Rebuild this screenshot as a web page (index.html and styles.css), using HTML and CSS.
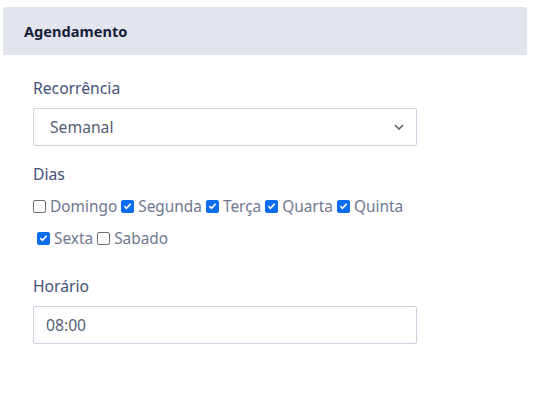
FILE: index.html
```html
<!DOCTYPE html>
<html lang="pt">
<head>
<meta charset="utf-8">
<link rel="stylesheet" href="styles.css">
</head>
<body>
<div class="card">
  <div class="card-header">Agendamento</div>
  <div class="card-body">
    <div class="field">
      <label class="label">Recorrência</label>
      <div class="select">
        <span>Semanal</span>
        <svg class="chev" width="10" height="6" viewBox="0 0 10 6"><path d="M1 1l4 4 4-4" fill="none" stroke="#555d6e" stroke-width="1.6"/></svg>
      </div>
    </div>
    <div class="field">
      <label class="label">Dias</label>
      <div class="days">
        <span class="day"><span class="cb"></span>Domingo</span>
        <span class="day"><span class="cb on"><svg viewBox="0 0 12 12"><path d="M2.6 6.2l2.3 2.3 4.6-5" fill="none" stroke="#fff" stroke-width="1.8"/></svg></span>Segunda</span>
        <span class="day"><span class="cb on"><svg viewBox="0 0 12 12"><path d="M2.6 6.2l2.3 2.3 4.6-5" fill="none" stroke="#fff" stroke-width="1.8"/></svg></span>Terça</span>
        <span class="day"><span class="cb on"><svg viewBox="0 0 12 12"><path d="M2.6 6.2l2.3 2.3 4.6-5" fill="none" stroke="#fff" stroke-width="1.8"/></svg></span>Quarta</span>
        <span class="day"><span class="cb on"><svg viewBox="0 0 12 12"><path d="M2.6 6.2l2.3 2.3 4.6-5" fill="none" stroke="#fff" stroke-width="1.8"/></svg></span>Quinta</span>
      </div>
      <div class="days second">
        <span class="day"><span class="cb on"><svg viewBox="0 0 12 12"><path d="M2.6 6.2l2.3 2.3 4.6-5" fill="none" stroke="#fff" stroke-width="1.8"/></svg></span>Sexta</span>
        <span class="day"><span class="cb"></span>Sabado</span>
      </div>
    </div>
    <div class="field">
      <label class="label">Horário</label>
      <div class="input">08:00</div>
    </div>
  </div>
</div>
</body>
</html>
```
FILE: styles.css
```css
html, body { margin: 0; padding: 0; background: #fff; }
body { font-family: "Noto Sans", "Open Sans", sans-serif; padding: 7px 10px 0 3px; }
.card { width: 524px; }
.card-header {
  background: #e2e5ee;
  height: 48px;
  box-sizing: border-box;
  padding: 14px 21px 0;
  font-weight: 700;
  font-size: 14.6px;
  color: #142038;
  border-radius: 3px 3px 0 0;
}
.card-body { padding: 23px 30px 0; }
.field { display: flex; flex-direction: column; }
.label { font-size: 15.7px; color: #44507a; line-height: 20px; margin-bottom: 10px; }
.select, .input {
  width: 384px; height: 38px; box-sizing: border-box;
  border: 1px solid #ced1df; border-radius: 2px;
  display: flex; align-items: center;
  font-size: 15.7px; color: #566075;
}
.select { padding: 0 12px 0 16px; justify-content: space-between; margin-bottom: 18px; }
.input { padding: 0 12px; }
.days { display: flex; align-items: center; font-size: 15.4px; color: #6f7790; height: 24px; margin-top: 0; }
.days.second { padding-left: 4px; margin-top: 8px; margin-bottom: 26px; }
.day { display: flex; align-items: center; margin-right: 4px; }
.cb {
  width: 13px; height: 13px; box-sizing: border-box;
  border: 1px solid #6b6f78; border-radius: 2px; margin-right: 4px;
  display: inline-flex; align-items: center; justify-content: center;
}
.cb.on { background: #0b6cf0; border-color: #0b6cf0; }
.cb svg { width: 12px; height: 12px; }
```
